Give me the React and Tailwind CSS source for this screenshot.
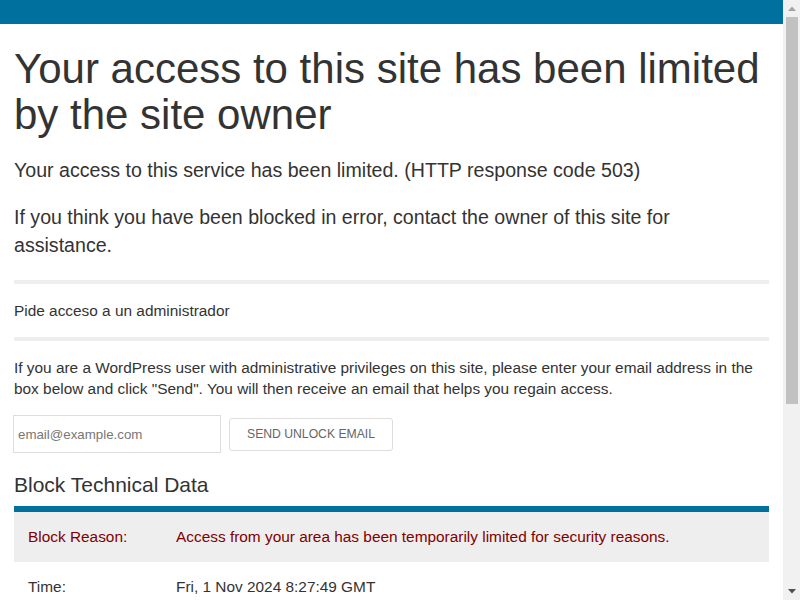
function Scrollbar() {
  return (
    <div className="flex w-[17px] shrink-0 flex-col items-center bg-[#f1f1f1]">
      <div className="flex h-[17px] w-full items-center justify-center">
        <svg width="8" height="5" viewBox="0 0 8 5">
          <path d="M0 5 L4 0.5 L8 5 Z" fill="#a3a3a3" />
        </svg>
      </div>
      <div className="h-[387px] w-[12px] bg-[#c1c1c1]" />
      <div className="flex-1" />
      <div className="flex h-[17px] w-full items-center justify-center">
        <svg width="8" height="5" viewBox="0 0 8 5">
          <path d="M0 0 L8 0 L4 4.5 Z" fill="#505050" />
        </svg>
      </div>
    </div>
  )
}

export default function App() {
  return (
    <div className="flex h-[600px] overflow-hidden bg-white text-[#333] font-['Liberation_Sans',Arial,sans-serif]">
      <main className="min-w-0 flex-1 overflow-hidden">
        {/* top bar */}
        <div className="h-6 bg-[#00709e]" />

        <div className="px-[14px]">
          <h1 className="mt-[22px] text-[42px] leading-[46px] text-[#333]">
            Your access to this site has been limited by the site owner
          </h1>

          <p className="mt-[18px] text-[19.6px] leading-[28px]">
            Your access to this service has been limited. (HTTP response code 503)
          </p>
          <p className="mt-[19px] text-[19.6px] leading-[28px]">
            If you think you have been blocked in error, contact the owner of this site for assistance.
          </p>

          <div className="mt-[21px] h-1 bg-[#eee]" />
          <p className="pb-[17px] pt-[18px] text-[15.4px] leading-[18px]">Pide acceso a un administrador</p>
          <div className="h-1 bg-[#eee]" />

          <p className="mt-[16px] text-[15.4px] leading-[21px]">
            If you are a WordPress user with administrative privileges on this site, please enter your email address in the box below and click "Send". You will then receive an email that helps you regain access.
          </p>

          <div className="mt-[16px] flex items-center gap-2">
            <input
              type="text"
              placeholder="email@example.com"
              className="ml-[-1px] h-[38px] w-[208px] border border-[#ddd] px-1 text-[13.3px] text-[#555] placeholder:text-[#777] outline-none"
            />
            <button className="h-[33px] w-[164px] rounded-[3px] border border-[#ddd] bg-white text-[12.2px] uppercase text-[#666]">
              Send Unlock Email
            </button>
          </div>

          <h2 className="mt-[20px] text-[21px] leading-[24px]">Block Technical Data</h2>

          <div className="mt-[9px] border-t-[6px] border-[#00709e]">
            <div className="flex h-[50px] items-center bg-[#eee] px-[14px] text-[15.4px] text-[#800000]">
              <span className="w-[148px] shrink-0">Block Reason:</span>
              <span>Access from your area has been temporarily limited for security reasons.</span>
            </div>
            <div className="flex h-[50px] items-center px-[14px] text-[15.4px]">
              <span className="w-[148px] shrink-0">Time:</span>
              <span>Fri, 1 Nov 2024 8:27:49 GMT</span>
            </div>
          </div>
        </div>
      </main>
      <Scrollbar />
    </div>
  )
}
